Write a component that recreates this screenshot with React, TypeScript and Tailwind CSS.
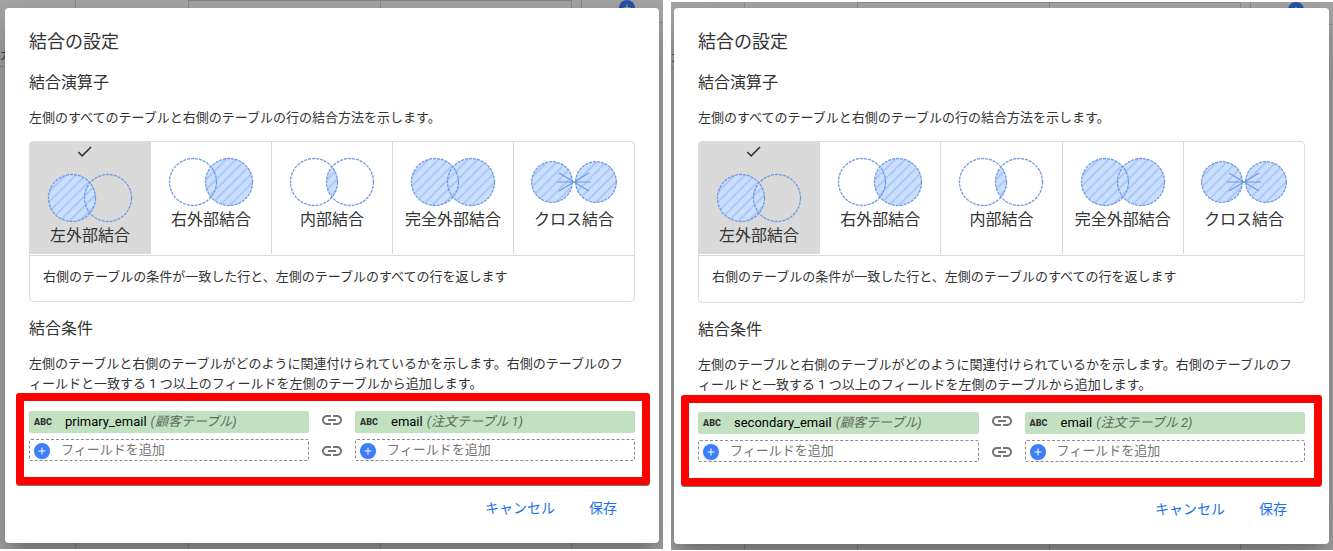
import { useId, useState } from 'react';
import { MdAdd, MdCheck, MdLink } from 'react-icons/md';

type JoinType = 'left' | 'right' | 'inner' | 'full' | 'cross';

interface Field {
  name: string;
  table: string;
}

interface JoinPanelProps {
  leftField: Field;
  rightField: Field;
  frameClass: string; // outer spacing of the dimmed page
  firstColumnClass: string;
  highlightClass: string;
  cutText: string;
}

const JOIN_TYPES: { id: JoinType; label: string; description: string }[] = [
  {
    id: 'left',
    label: '左外部結合',
    description: '右側のテーブルの条件が一致した行と、左側のテーブルのすべての行を返します',
  },
  {
    id: 'right',
    label: '右外部結合',
    description: '左側のテーブルの条件が一致した行と、右側のテーブルのすべての行を返します',
  },
  { id: 'inner', label: '内部結合', description: '両方のテーブルの条件が一致した行のみを返します' },
  { id: 'full', label: '完全外部結合', description: '両方のテーブルのすべての行を返します' },
  { id: 'cross', label: 'クロス結合', description: '両方のテーブルの行のすべての組み合わせを返します' },
];

function JoinIcon({ type }: { type: JoinType }) {
  const id = useId();
  const hatch = `url(#${id}-hatch)`;
  const dashed = { stroke: '#6f9ae0', strokeWidth: 1.3, strokeDasharray: '3 1' };

  return (
    <svg width="86" height="50" viewBox="0 0 86 50" fill="none" aria-hidden="true">
      <defs>
        <pattern id={`${id}-hatch`} width="7" height="7" patternUnits="userSpaceOnUse" patternTransform="rotate(45)">
          <rect width="7" height="7" fill="#cbdefd" />
          <rect width="1.6" height="7" fill="#a3c4fb" />
        </pattern>
        <clipPath id={`${id}-clip`}>
          <circle cx="25" cy="25" r="23.5" />
        </clipPath>
      </defs>
      {type === 'cross' ? (
        <>
          <circle cx="21" cy="25" r="20.3" fill={hatch} {...dashed} />
          <circle cx="65" cy="25" r="20.3" fill={hatch} {...dashed} />
          <path d="M26 25h34M28 16l30 18M58 16L28 34" stroke="#6f9ae0" strokeWidth="1.2" />
        </>
      ) : (
        <>
          {(type === 'left' || type === 'full') && <circle cx="25" cy="25" r="23.5" fill={hatch} />}
          {(type === 'right' || type === 'full') && <circle cx="61" cy="25" r="23.5" fill={hatch} />}
          {type === 'inner' && <circle cx="61" cy="25" r="23.5" fill={hatch} clipPath={`url(#${id}-clip)`} />}
          <circle cx="25" cy="25" r="23.5" {...dashed} />
          <circle cx="61" cy="25" r="23.5" {...dashed} />
        </>
      )}
    </svg>
  );
}

function FieldColumn({ field }: { field: Field }) {
  return (
    <div className="flex flex-col gap-[6px]">
      <div className="flex h-[22px] items-center rounded-[2px] bg-[#c1e1c1] pl-[5px] text-[13px] leading-5">
        <span className="w-[31px] text-[9px] font-black text-[#333]">ABC</span>
        <span className="text-black">{field.name}</span>
        <em className="ml-1 text-[#5f6a5f]">({field.table})</em>
      </div>
      <button
        type="button"
        className="flex h-[22px] items-center rounded-[2px] border border-dashed border-[#8c8c8c] pb-px pl-1 text-[13px] leading-5 text-[#757575]"
      >
        <span className="mt-[3px] mr-[11px] flex size-4 items-center justify-center rounded-full bg-[#3d7ffa] text-white shadow">
          <MdAdd size={12} />
        </span>
        フィールドを追加
      </button>
    </div>
  );
}

function JoinPanel({ leftField, rightField, frameClass, firstColumnClass, highlightClass, cutText }: JoinPanelProps) {
  const [joinType, setJoinType] = useState<JoinType>('left');
  const group = useId();
  const current = JOIN_TYPES.find((t) => t.id === joinType);

  return (
    <section className={`relative flex flex-col overflow-hidden bg-[#a9a9a9] ${frameClass}`}>
      {/* Dimmed page behind the dialog */}
      <div className="absolute inset-0 flex" aria-hidden="true">
        <div className={`shrink-0 border-r border-[#8d8d8d] ${firstColumnClass}`}>
          <div className="h-[67px] overflow-hidden border-b border-[#8d8d8d] pt-[45px] text-[13px] leading-5 text-[#444]">
            {cutText}
          </div>
        </div>
        <div className="w-[113px] shrink-0 border-r border-[#8d8d8d]" />
        <div className="w-[192px] shrink-0 border-t border-r border-[#8d8d8d]" />
        <div className="w-[191px] shrink-0 border-t border-r border-[#8d8d8d]" />
        <div className="ml-[9px] flex h-[23px] flex-1 border-b border-l border-[#8d8d8d] pl-[37px]">
          <span className="flex size-4 items-center justify-center rounded-full bg-[#2754ad] text-[#bbb]">
            <MdAdd size={12} />
          </span>
        </div>
      </div>

      <div
        role="dialog"
        aria-label="結合の設定"
        className="relative flex flex-1 flex-col rounded-[4px] bg-white px-6 pt-[22px] pb-[17px] shadow-[0_11px_15px_-7px_rgba(0,0,0,0.2),0_24px_38px_3px_rgba(0,0,0,0.14),0_9px_46px_8px_rgba(0,0,0,0.12)]"
      >
        <h1 className="text-[18px] leading-6">結合の設定</h1>
        <h2 className="mt-[17px] text-base leading-6">結合演算子</h2>
        <p className="mt-[13px] text-[13px] leading-5">
          左側のすべてのテーブルと右側のテーブルの行の結合方法を示します。
        </p>

        <div className="mt-[13px] flex flex-1 flex-col rounded-[4px] border border-[#dadce0]">
          <div className="-mr-px grid h-[113px] grid-cols-5 pb-px">
            {JOIN_TYPES.map((t) => (
              <label
                key={t.id}
                className="flex cursor-pointer flex-col items-center border-r border-[#dadada] last:border-transparent has-checked:bg-[#dadada]"
              >
                <input
                  type="radio"
                  name={group}
                  className="sr-only"
                  checked={joinType === t.id}
                  onChange={() => setJoinType(t.id)}
                />
                {joinType === t.id ? (
                  <span className="flex h-[31px] pr-3">
                    <MdCheck size={19} />
                  </span>
                ) : (
                  <span className="h-[15px]" />
                )}
                <JoinIcon type={t.id} />
                <span className="text-base leading-[26px]">{t.label}</span>
              </label>
            ))}
          </div>
          <p className="border-t border-[#dadada] px-[13px] pt-[11px] pb-[14px] text-[13px] leading-5">
            {current?.description}
          </p>
        </div>

        <h2 className="mt-[15px] text-base leading-6">結合条件</h2>
        <p className="mt-[13px] pr-1 text-[13px] leading-5">
          左側のテーブルと右側のテーブルがどのように関連付けられているかを示します。右側のテーブルのフィールドと一致する 1 つ以上のフィールドを左側のテーブルから追加します。
        </p>

        <div className="relative mt-[17px] grid grid-cols-[1fr_46px_1fr]">
          <FieldColumn field={leftField} />
          <div className="-mt-[3px] flex h-[53px] flex-col items-center gap-[7px] text-[#757575]">
            <MdLink size={24} className="shrink-0" />
            <MdLink size={24} className="shrink-0" />
          </div>
          <FieldColumn field={rightField} />
          <div
            className={`pointer-events-none absolute rounded-[3px] border-8 border-[#fe0000] shadow-[0_1px_0_#777] ${highlightClass}`}
          />
        </div>

        <div className="mt-[29px] mr-px flex justify-end text-sm text-[#1a73e8]">
          <button type="button" className="h-9 px-[17px]">
            キャンセル
          </button>
          <button type="button" className="h-9 px-[17px]">
            保存
          </button>
        </div>
      </div>
    </section>
  );
}

export default function App() {
  return (
    <main
      lang="ja"
      className="grid min-h-screen grid-cols-[663fr_662fr] gap-2 bg-white font-[Roboto,'Noto_Sans_CJK_JP',sans-serif] text-[#333]"
    >
      <JoinPanel
        leftField={{ name: 'primary_email', table: '顧客テーブル' }}
        rightField={{ name: 'email', table: '注文テーブル 1' }}
        frameClass="mb-[2px] pt-2 pr-1 pb-[6px] pl-[5px]"
        firstColumnClass="w-[76px]"
        highlightClass="-top-[18px] -right-[15px] -bottom-6 -left-[13px]"
        cutText="ガ"
      />
      <JoinPanel
        leftField={{ name: 'secondary_email', table: '顧客テーブル' }}
        rightField={{ name: 'email', table: '注文テーブル 2' }}
        frameClass="mt-[2px] mb-px pt-[6px] pr-1 pb-[6px] pl-[3px]"
        firstColumnClass="w-[74px]"
        highlightClass="-top-[17px] -right-[17px] -bottom-6 -left-[17px]"
        cutText="ガ"
      />
    </main>
  );
}
